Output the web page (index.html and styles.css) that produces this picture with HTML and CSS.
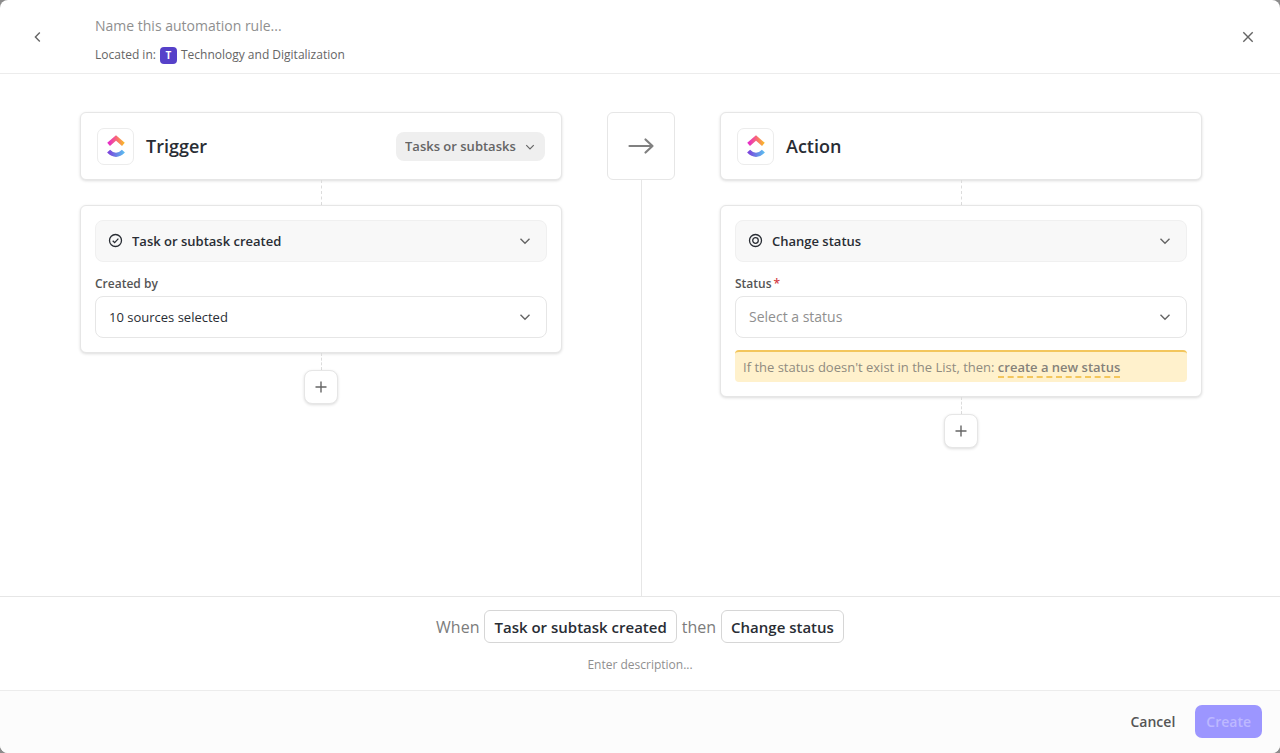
FILE: index.html
```html
<!DOCTYPE html>
<html lang="en">
<head>
	<meta charset="UTF-8">
	<meta name="viewport" content="width=device-width, initial-scale=1">
	<title>Automation rule</title>
	<link rel="stylesheet" href="styles.css">
</head>
<body>
	<svg class="sprite" aria-hidden="true">
		<defs>
			<linearGradient id="logo-top" x1="0" y1="0" x2="1" y2="0">
				<stop offset="0" stop-color="#e62cc8" />
				<stop offset=".5" stop-color="#f7657c" />
				<stop offset="1" stop-color="#f8b52c" />
			</linearGradient>
			<linearGradient id="logo-bottom" x1="0" y1="0" x2="1" y2="0">
				<stop offset="0" stop-color="#7b45dc" />
				<stop offset="1" stop-color="#5cb8ee" />
			</linearGradient>
			<symbol id="logo" viewBox="0 0 18 23">
				<path d="M1.6 9.4 9 3 16.4 9.4" fill="none" stroke="url(#logo-top)" stroke-width="4.200" />
				<path d="M1.6 16.1Q9 23.6 16.4 16.1" fill="none" stroke="url(#logo-bottom)" stroke-width="4.200" />
			</symbol>
			<symbol id="chevron" viewBox="0 0 12 12">
				<path d="M1.5 3.8 6 8.2 10.5 3.8" />
			</symbol>
			<symbol id="plus" viewBox="0 0 12 12">
				<path d="M6 .5V11.5M.5 6H11.5" />
			</symbol>
		</defs>
	</svg>

	<div class="modal">
		<header class="header">
			<button class="icon-button" type="button" aria-label="Back">
				<svg class="icon" width="12" height="12" viewBox="0 0 12 12"><path d="M7.8 1.5 3.4 6 7.8 10.5" /></svg>
			</button>
			<div class="rule">
				<input class="rule-name" type="text" placeholder="Name this automation rule..." aria-label="Rule name">
				<div class="rule-location">
					<span>Located in:</span>
					<span class="space-badge">T</span>
					<span>Technology and Digitalization</span>
				</div>
			</div>
			<button class="icon-button" type="button" aria-label="Close">
				<svg class="icon" width="12" height="12" viewBox="0 0 12 12"><path d="M1.3 1.3 10.7 10.7M10.7 1.3 1.3 10.7" /></svg>
			</button>
		</header>

		<main class="builder">
			<section class="column">
				<div class="card card-head">
					<span class="logo"><svg width="18" height="23"><use href="#logo" /></svg></span>
					<h2 class="card-title">Trigger</h2>
					<div class="select select-small">
						<select aria-label="Applies to"><option>Tasks or subtasks</option></select>
						<svg class="icon chevron"><use href="#chevron" /></svg>
					</div>
				</div>
				<div class="connector"></div>
				<div class="card card-body">
					<div class="select select-type">
						<svg class="icon select-icon" viewBox="0 0 14 14"><circle cx="7" cy="7" r="5.6" /><path d="M4.4 7.2 6.2 9 9.7 5.3" /></svg>
						<select aria-label="Trigger type"><option>Task or subtask created</option></select>
						<svg class="icon chevron"><use href="#chevron" /></svg>
					</div>
					<label class="label" for="created-by">Created by</label>
					<div class="select">
						<select id="created-by"><option>10 sources selected</option></select>
						<svg class="icon chevron"><use href="#chevron" /></svg>
					</div>
				</div>
				<div class="connector connector-short"></div>
				<button class="add" type="button" aria-label="Add condition"><svg class="icon"><use href="#plus" /></svg></button>
			</section>

			<div class="divider">
				<div class="arrow">
					<svg class="icon" width="28" height="18" viewBox="0 0 28 18"><path d="M2.5 9H25.5M18.5 2.5 25.5 9 18.500 15.5" /></svg>
				</div>
				<div class="divider-line"></div>
			</div>

			<section class="column">
				<div class="card card-head">
					<span class="logo"><svg width="18" height="23"><use href="#logo" /></svg></span>
					<h2 class="card-title">Action</h2>
				</div>
				<div class="connector"></div>
				<div class="card card-body">
					<div class="select select-type">
						<svg class="icon select-icon" viewBox="0 0 14 14"><circle cx="7" cy="7" r="5.6" /><circle cx="7" cy="7" r="2.6" /></svg>
						<select aria-label="Action type"><option>Change status</option></select>
						<svg class="icon chevron"><use href="#chevron" /></svg>
					</div>
					<label class="label" for="status">Status<span class="required">*</span></label>
					<div class="select select-empty">
						<select id="status"><option>Select a status</option></select>
						<svg class="icon chevron"><use href="#chevron" /></svg>
					</div>
					<p class="notice">If the status doesn't exist in the List, then: <a href="#">create a new status</a></p>
				</div>
				<div class="connector connector-short"></div>
				<button class="add" type="button" aria-label="Add action"><svg class="icon"><use href="#plus" /></svg></button>
			</section>
		</main>

		<section class="summary">
			<div class="sentence">
				<span>When</span>
				<button class="chip" type="button">Task or subtask created</button>
				<span>then</span>
				<button class="chip" type="button">Change status</button>
			</div>
			<input class="description" type="text" placeholder="Enter description..." aria-label="Description">
		</section>

		<footer class="footer">
			<button class="button" type="button">Cancel</button>
			<button class="button button-primary" type="button" disabled>Create</button>
		</footer>
	</div>
</body>
</html>
```
FILE: styles.css
```css
* {
	box-sizing: border-box;
}

body {
	margin: 0;
	background: #8c8c8c;
	color: #292d34;
	font-family: "Segoe UI", "Open Sans", sans-serif;
	font-size: 14px;
	line-height: 20px;
}

button,
input,
select {
	margin: 0;
	padding: 0;
	border: 0;
	background: none;
	color: inherit;
	font: inherit;
}

.sprite {
	position: absolute;
	width: 0;
	height: 0;
}

.icon {
	flex: none;
	fill: none;
	stroke: #656565;
	stroke-width: 1.4;
}

.modal {
	display: flex;
	flex-direction: column;
	min-height: 100vh;
	overflow: hidden;
	border-radius: 8px;
	background: #fff;
}

/* header */
.header {
	display: flex;
	align-items: center;
	padding: 16px 20px 8px 26px;
	border-bottom: 1px solid #ececec;
}

.icon-button {
	display: flex;
	align-items: center;
	justify-content: center;
	width: 24px;
	height: 24px;
	margin-bottom: 8px;
}

.rule {
	flex: 1;
	padding-left: 45px;
}

.rule-name {
	display: block;
	width: 100%;
	height: 20px;
	outline: none;
}

input::placeholder {
	color: #8f8f8f;
	opacity: 1;
}

.rule-location {
	display: flex;
	align-items: center;
	gap: 4px;
	margin-top: 9px;
	color: #656565;
	font-size: 12px;
}

.space-badge {
	width: 17px;
	height: 17px;
	border-radius: 4px;
	background: #5641c9;
	color: #fff;
	font-size: 10px;
	font-weight: 700;
	line-height: 17px;
	text-align: center;
}

/* builder */
.builder {
	display: grid;
	flex: 1;
	grid-template-columns: 1fr 68px 1fr;
	column-gap: 45px;
	padding: 38px 78px 0 80px;
}

.column {
	display: flex;
	flex-direction: column;
}

.card {
	border: 1px solid #e6e6e6;
	border-radius: 6px;
	background: #fff;
	box-shadow: 0 1px 3px rgba(0, 0, 0, .14);
}

.card-head {
	display: flex;
	align-items: center;
	height: 68px;
	padding: 0 16px;
}

.logo {
	display: flex;
	align-items: center;
	justify-content: center;
	width: 37px;
	height: 37px;
	border: 1px solid #ececec;
	border-radius: 7px;
}

.card-title {
	flex: 1;
	margin: 0 0 0 12px;
	font-size: 18px;
	font-weight: 600;
	line-height: 24px;
}

.connector {
	align-self: center;
	width: 1px;
	height: 25px;
	border-left: 1px dashed #dcdcdc;
}

.connector-short {
	height: 17px;
}

.card-body {
	display: flex;
	flex-direction: column;
	padding: 14px;
}

.select {
	position: relative;
}

.select select {
	display: block;
	width: 100%;
	height: 42px;
	padding: 0 40px 0 13px;
	border: 1px solid #e6e6e6;
	border-radius: 8px;
	font-size: 13px;
	appearance: none;
}

.select-type select {
	padding-left: 36px;
	border-color: #f0f0f0;
	background: #f8f8f8;
	font-weight: 600;
}

.select-empty select {
	color: #8f8f8f;
	font-size: 14px;
}

.select-icon {
	position: absolute;
	top: 13px;
	left: 13px;
	width: 15px;
	height: 15px;
	stroke: #292d34;
	stroke-width: 1.2;
	pointer-events: none;
}

.chevron {
	position: absolute;
	top: 15px;
	right: 16px;
	width: 12px;
	height: 12px;
	pointer-events: none;
}

.select-small select {
	width: 149px;
	height: 29px;
	padding: 0 24px 0 9px;
	border: 0;
	background: #efefef;
	color: #656565;
	font-weight: 600;
}

.select-small .chevron {
	top: 10px;
	right: 10px;
	width: 10px;
	height: 10px;
}

.label {
	margin: 13px 0 4px;
	color: #555;
	font-size: 12px;
	font-weight: 600;
	line-height: 17px;
}

.required {
	margin-left: 2px;
	color: #d33d44;
}

.notice {
	margin: 12px 0 0;
	padding: 5px 8px;
	border-top: 2px solid #f3c65c;
	border-radius: 4px;
	background: #fff1cc;
	color: #8f8b80;
	font-size: 13px;
}

.notice a {
	border-bottom: 2px dashed #f3c65c;
	color: #85817a;
	font-weight: 600;
	text-decoration: none;
}

.add {
	display: flex;
	align-items: center;
	justify-content: center;
	align-self: center;
	width: 34px;
	height: 34px;
	border: 1px solid #e6e6e6;
	border-radius: 8px;
	background: #fff;
	box-shadow: 0 1px 3px rgba(0, 0, 0, .14);
}

.add .icon {
	width: 12px;
	height: 12px;
}

/* arrow between the columns and the line below it */
.divider {
	display: flex;
	flex-direction: column;
	align-items: center;
}

.arrow {
	display: flex;
	align-items: center;
	justify-content: center;
	width: 68px;
	height: 68px;
	border: 1px solid #e6e6e6;
	border-radius: 6px;
}

.arrow .icon {
	stroke: #808080;
	stroke-width: 2.2;
	stroke-linecap: round;
	stroke-linejoin: round;
}

.divider-line {
	flex: 1;
	width: 1px;
	background: #e6e6e6;
}

/* summary */
.summary {
	display: flex;
	flex-direction: column;
	align-items: center;
	gap: 12px;
	padding: 13px 20px 15px;
	border-top: 1px solid #e6e6e6;
}

.sentence {
	display: flex;
	align-items: center;
	gap: 5px;
	color: #7c7c7c;
	font-size: 16px;
}

.chip {
	height: 33px;
	padding: 0 9px;
	border: 1px solid #d6d6d6;
	border-radius: 6px;
	color: #292d34;
	font-size: 15px;
	font-weight: 600;
}

.description {
	width: 100%;
	height: 20px;
	font-size: 12px;
	text-align: center;
	outline: none;
}

/* footer */
.footer {
	display: flex;
	justify-content: flex-end;
	gap: 12px;
	padding: 14px 18px 15px;
	border-top: 1px solid #ececec;
	background: #fcfcfc;
}

.button {
	height: 33px;
	padding: 0 8px;
	border-radius: 7px;
	color: #555;
	font-weight: 600;
}

.button-primary {
	padding: 0 11px;
	background: #9c96ff;
	color: #bdb8ff;
}
```
